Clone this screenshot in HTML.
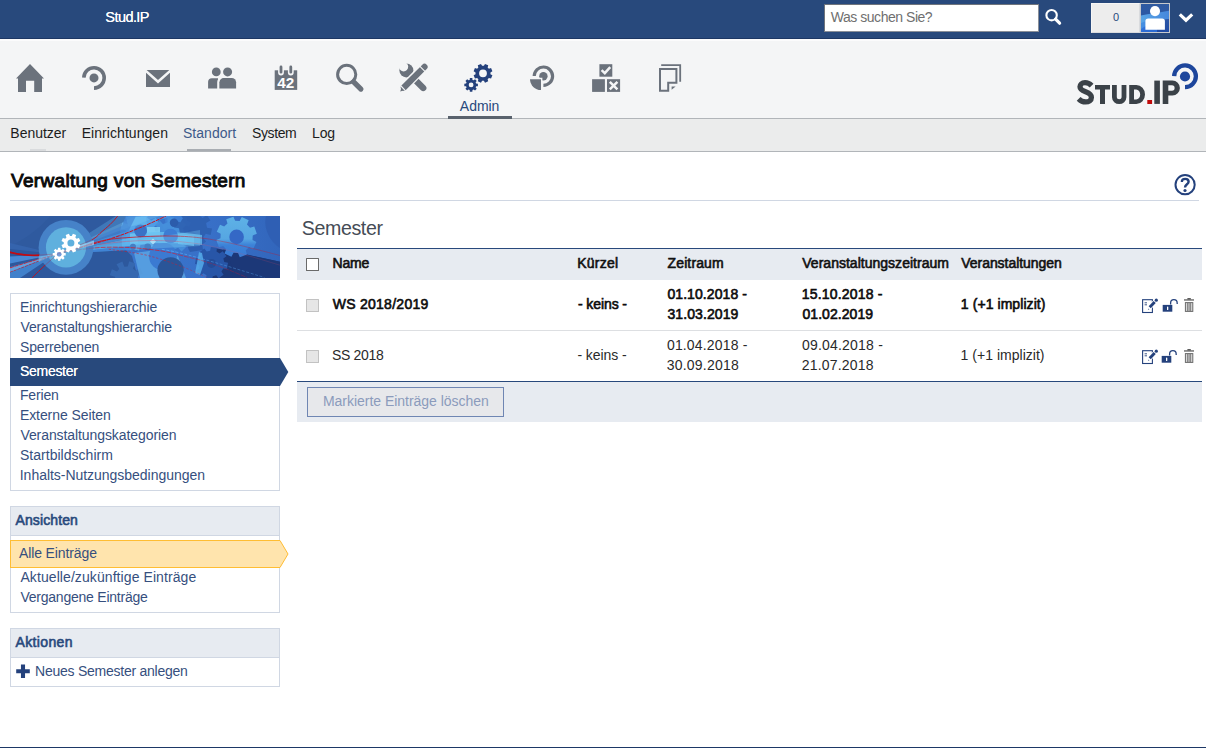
<!DOCTYPE html>
<html lang="de"><head><meta charset="utf-8"><title>Verwaltung von Semestern - Stud.IP</title>
<style>
html,body{margin:0;padding:0;}
body{width:1206px;height:748px;overflow:hidden;background:#fff;font-family:"Liberation Sans",sans-serif;font-size:14px;position:relative;}
.a{position:absolute;}
.t{position:absolute;white-space:pre;line-height:20px;height:20px;}
svg{position:absolute;overflow:visible;}
</style></head>
<body>
<div class="a" style="left:0;top:0;width:1206px;height:38px;background:#28497c;"></div>
<div class="a" style="left:0;top:38px;width:1206px;height:1px;background:#1d3764;"></div>
<div class="a" style="left:0;top:39px;width:1206px;height:2px;background:#fbfbfc;"></div>
<div class="a" style="left:0;top:41px;width:1206px;height:77px;background:#f4f5f6;"></div>
<div class="a" style="left:0;top:118px;width:1206px;height:1px;background:#b1b5b9;"></div>
<div class="a" style="left:0;top:119px;width:1206px;height:32px;background:#ebecec;"></div>
<div class="a" style="left:0;top:151px;width:1206px;height:1px;background:#b1b5b9;"></div>
<div class="t" style="left:105.37px;top:7.18px;font-size:14.5px;font-weight:400;letter-spacing:-0.578px;color:#fff;text-shadow:0 0 0.4px #fff;">Stud.IP</div>
<div class="a" style="left:824px;top:4px;width:215px;height:28px;box-sizing:border-box;background:#fff;border:1px solid #8a8f98;border-top-color:#6f747c;border-left-color:#6f747c;"></div>
<div class="t" style="left:830.76px;top:6.75px;font-size:14px;font-weight:400;letter-spacing:-0.466px;color:#6f6f6f;">Was suchen Sie?</div>
<svg style="left:1040px;top:4px" width="26" height="26" viewBox="1040 4 26 26"><circle cx="1051.6" cy="15.2" r="5.2" fill="none" stroke="#fff" stroke-width="2.1"/><path d="M1055.6,19.2 L1059.6,23.2" stroke="#fff" stroke-width="3.2" stroke-linecap="round"/></svg>
<div class="a" style="left:1091px;top:3px;width:49px;height:30px;box-sizing:border-box;background:#ededed;border:1px solid #d9dbde;border-top-color:#f6f6f6;border-left-color:#f6f6f6;"></div>
<div class="t" style="left:1096px;width:40px;text-align:center;top:7.4px;font-size:11px;color:#28497c;">0</div>
<svg style="left:1140px;top:3px" width="30" height="30" viewBox="-1 0 30 30">
<defs><linearGradient id="av" x1="0" y1="0" x2="0" y2="1"><stop offset="0" stop-color="#2f5aa0"/><stop offset="0.5" stop-color="#2c58a6"/><stop offset="1" stop-color="#1f4aa4"/></linearGradient>
<linearGradient id="av2" x1="0" y1="0" x2="1" y2="0"><stop offset="0" stop-color="#5aa6e6"/><stop offset="1" stop-color="#4586dc"/></linearGradient>
<clipPath id="avc"><rect x="-1" y="0" width="30" height="30"/></clipPath></defs>
<rect x="-1" y="0" width="30" height="30" fill="url(#av)"/>
<g clip-path="url(#avc)">
<path d="M-1,12.6 L0,12.5 C8,10.5 18,10 29,7.5 L29,16 C22,15.5 14,18 0,27 Z" fill="url(#av2)"/>
<path d="M0,20 C8,16 18,15 24,16 C16,20 8,24 0,29 Z" fill="#3f86e0" opacity="0.7"/>
<path d="M0,26 C6,22 12,20 16,19.5 L16,30 L0,30 Z" fill="#2f70d8" opacity="0.9"/>
</g>
<circle cx="14" cy="8.1" r="5.05" fill="#fff"/>
<path d="M4.4,26.8 V18.3 a2.8,2.8 0 0 1 2.8,-2.8 h13.9 a2.8,2.8 0 0 1 2.8,2.8 V26.8 Z" fill="#fff"/>
<rect x="-0.5" y="0.5" width="29" height="29" fill="none" stroke="#c6c8cc" stroke-width="1"/>
</svg>
<svg style="left:1176px;top:10px" width="20" height="14" viewBox="1176 10 20 14"><path d="M1179.8,14.4 L1186,20.2 L1192.2,14.4" fill="none" stroke="#fff" stroke-width="3.2" stroke-linejoin="miter"/></svg>
<svg style="left:0;top:58px" width="1206" height="40" viewBox="0 58 1206 40"><path d="M30,64.1 L44,78.4 L42,78.4 L42,92 L34.2,92 L34.2,80.8 L26,80.8 L26,92 L18,92 L18,78.4 L16,78.4 Z" fill="#6b727c"/><path d="M83.8,77.6 A10.2,10.2 0 1 1 94,88.1" fill="none" stroke="#6b727c" stroke-width="3.6"/><circle cx="94" cy="77.9" r="4.5" fill="#6b727c"/><rect x="146" y="70" width="24" height="17" fill="#6b727c"/><path d="M145.5,70.6 L158,81.7 L170.5,70.6" fill="none" stroke="#f4f5f6" stroke-width="2.6"/><circle cx="216.3" cy="71.9" r="4.4" fill="#6b727c"/><circle cx="227.6" cy="71.9" r="4.5" fill="#6b727c"/><path d="M208.1,88.6 V82 a3.8,3.8 0 0 1 3.8,-3.8 H218 V88.6 Z" fill="#6b727c"/><path d="M219.2,88.6 V82.2 a4.3,4.3 0 0 1 4.3,-4.3 h8.3 a4.3,4.3 0 0 1 4.3,4.3 V88.6 Z" fill="#6b727c" stroke="#f4f5f6" stroke-width="0" /><path d="M218.2,89 V82.2 a5.3,5.3 0 0 1 3,-4.6" fill="none" stroke="#f4f5f6" stroke-width="2"/><rect x="274.7" y="70.3" width="22.5" height="19.6" fill="#6b727c"/><path d="M281,66.5 V72.5 M290.8,66.5 V72.5" stroke="#f4f5f6" stroke-width="5.8" stroke-linecap="round"/><path d="M281,67 V72.2 M290.8,67 V72.2" stroke="#6b727c" stroke-width="2.8" stroke-linecap="round"/><text x="285.8" y="87.6" font-family="Liberation Sans, sans-serif" font-weight="700" font-size="14" fill="#fff" text-anchor="middle" textLength="17" lengthAdjust="spacingAndGlyphs">42</text><circle cx="346.7" cy="74.4" r="9.1" fill="none" stroke="#6b727c" stroke-width="3"/><path d="M353.6,81.8 L360.9,89.1" stroke="#6b727c" stroke-width="5.2" stroke-linecap="round"/><path d="M410.5,75.3 L423.2,87.9" stroke="#6b727c" stroke-width="6.4" stroke-linecap="round"/><circle cx="406.4" cy="70.4" r="7" fill="#6b727c"/><circle cx="403.6" cy="66.8" r="4.6" fill="#f4f5f6"/><path d="M400.5,90.8 L424.6,66.4" stroke="#f4f5f6" stroke-width="9" stroke-linecap="butt"/><path d="M403.9,87.5 L424.5,66.9" stroke="#6b727c" stroke-width="6.2" stroke-linecap="round"/><path d="M419.2,65.6 L425.4,71.8" stroke="#f4f5f6" stroke-width="1.1"/><path d="M400.2,91.6 L401.6,87.2 L404.6,90.2 Z" fill="#6b727c"/><path d="M401.0,86.0 L405.6,90.8" stroke="#f4f5f6" stroke-width="1.1"/><path d="M490.45,74.19L492.39,75.31L491.06,78.52L488.90,77.93L487.63,79.20L488.22,81.36L485.01,82.69L483.89,80.75L482.11,80.75L480.99,82.69L477.78,81.36L478.37,79.20L477.10,77.93L474.94,78.52L473.61,75.31L475.55,74.19L475.55,72.41L473.61,71.29L474.94,68.08L477.10,68.67L478.37,67.40L477.78,65.24L480.99,63.91L482.11,65.85L483.89,65.85L485.01,63.91L488.22,65.24L487.63,67.40L488.90,68.67L491.06,68.08L492.39,71.29L490.45,72.41ZM486.90,73.30A3.9,3.9 0 1 0 479.10,73.30A3.9,3.9 0 1 0 486.90,73.30Z" fill="#24417c" fill-rule="evenodd"/><path d="M476.11,83.50L477.89,83.65L477.89,86.15L476.11,86.30L475.63,87.45L476.78,88.81L475.01,90.58L473.65,89.43L472.50,89.91L472.35,91.69L469.85,91.69L469.70,89.91L468.55,89.43L467.19,90.58L465.42,88.81L466.57,87.45L466.09,86.30L464.31,86.15L464.31,83.65L466.09,83.50L466.57,82.35L465.42,80.99L467.19,79.22L468.55,80.37L469.70,79.89L469.85,78.11L472.35,78.11L472.50,79.89L473.65,80.37L475.01,79.22L476.78,80.99L475.63,82.35ZM473.50,84.90A2.4,2.4 0 1 0 468.70,84.90A2.4,2.4 0 1 0 473.50,84.90Z" fill="#24417c" fill-rule="evenodd"/><path d="M534.2,76 A9.2,9.2 0 1 1 543.4,85.4" fill="none" stroke="#6b727c" stroke-width="3.2"/><circle cx="543.4" cy="76.2" r="4.2" fill="#6b727c"/><path d="M542.4,77.8 V91.4 A12.6,12.6 0 0 1 528.6,77.8 Z" fill="#f4f5f6"/><path d="M541,79.2 V90 A10.9,10.9 0 0 1 530,79.2 Z" fill="#6b727c"/><rect x="599.4" y="64.2" width="12.9" height="12.5" fill="#6b727c"/><path d="M601.6,70.2 L604.8,73.2 L610.2,67.2" fill="none" stroke="#f4f5f6" stroke-width="2.5"/><rect x="592.1" y="79.2" width="12.8" height="12.7" fill="#6b727c"/><rect x="607" y="79.2" width="13.1" height="12.7" fill="#6b727c"/><path d="M609.8,81.8 L617.4,89.4 M617.4,81.8 L609.8,89.4" stroke="#f4f5f6" stroke-width="2.5"/><path d="M660,69 H676.4 V82.8 H668.2 V90.8 H660 Z" fill="none" stroke="#6b727c" stroke-width="2"/><path d="M661.2,65.2 H680.2 V81.7" fill="none" stroke="#6b727c" stroke-width="1.8"/><path d="M671.6,89.8 V86.6 H675.6 Z" fill="#6b727c"/></svg>
<div class="t" style="left:459.83px;top:96.15px;font-size:14px;font-weight:400;letter-spacing:-0.03px;color:#28497c;">Admin</div>
<div class="a" style="left:448px;top:116px;width:64px;height:3px;background:#59626d;"></div>
<svg style="left:1070px;top:58px" width="136" height="52" viewBox="1070 58 136 52">
<path d="M1091.6,85.6 C1089.6,83.6 1087.3,82.7 1085,82.7 C1081.8,82.7 1080,84.6 1080,86.8 C1080,89.6 1082.6,90.7 1085.6,91.8 C1088.8,93 1091.4,94.3 1091.4,97.4 C1091.4,100.4 1088.8,101.9 1085.6,101.9 C1082.8,101.9 1080.6,100.8 1078.6,98.8" fill="none" stroke="#3b4248" stroke-width="5.3"/>
<path d="M1095,85.1 H1110 V89.6 H1105 V103.9 H1100 V89.6 H1095 Z" fill="#3b4248"/>
<path d="M1114.4,85.1 V97.3 a4.8,4.4 0 0 0 9.6,0 V85.1" fill="none" stroke="#3b4248" stroke-width="4.8"/>
<path d="M1129.2,85.1 H1136.4 a8.6,9.4 0 0 1 0,18.8 H1129.2 Z M1134,89.4 V99.6 H1136.2 a4,5.1 0 0 0 0,-10.2 Z" fill="#3b4248" fill-rule="evenodd"/>
<rect x="1147.3" y="100" width="4.8" height="4" fill="#c00a0a"/>
<rect x="1154.3" y="80.6" width="5.6" height="23.3" fill="#3b4248"/>
<path d="M1162.7,80.6 H1172.4 a7.5,7.4 0 0 1 0,14.8 H1168.3 V103.9 H1162.7 Z M1168.3,85.3 V90.7 H1172 a2.6,2.7 0 0 0 0,-5.4 Z" fill="#3b4248" fill-rule="evenodd"/>
<path d="M1174.2,76.1 A10.85,10.85 0 1 1 1185,87.1" fill="none" stroke="#1d469c" stroke-width="4.3"/>
<circle cx="1185" cy="76.5" r="5.1" fill="#1d469c"/>
</svg>
<div class="t" style="left:10.32px;top:122.85px;font-size:14px;font-weight:400;letter-spacing:-0.011px;color:#1c1c1c;">Benutzer</div>
<div class="t" style="left:81.72px;top:122.85px;font-size:14px;font-weight:400;letter-spacing:0.054px;color:#1c1c1c;">Einrichtungen</div>
<div class="t" style="left:182.97px;top:122.85px;font-size:14px;font-weight:400;letter-spacing:0.031px;color:#3d5a8a;">Standort</div>
<div class="t" style="left:251.97px;top:122.85px;font-size:14px;font-weight:400;letter-spacing:-0.379px;color:#1c1c1c;">System</div>
<div class="t" style="left:312.12px;top:122.85px;font-size:14px;font-weight:400;letter-spacing:-0.178px;color:#1c1c1c;">Log</div>
<div class="a" style="left:30px;top:149px;width:16px;height:2px;background:#d9dbdd;"></div>
<div class="a" style="left:187px;top:149px;width:44px;height:2px;background:#a9adb2;"></div>
<div class="t" style="left:11.00px;top:171.02px;font-size:19px;font-weight:400;-webkit-text-stroke:0.95px #0a0a0a;letter-spacing:0.32px;color:#0a0a0a;">Verwaltung von Semestern</div>
<div class="a" style="left:10px;top:200px;width:1189px;height:1px;background:#d0d7e3;"></div>
<svg style="left:1173px;top:173px" width="24" height="24" viewBox="1173 173 24 24"><circle cx="1185.1" cy="184.7" r="9.6" fill="none" stroke="#24417c" stroke-width="2"/>
<path d="M1181.9,182 C1181.7,179.6 1183.3,178.9 1185.2,178.9 C1187.3,178.9 1188.6,180 1188.6,181.8 C1188.6,184.2 1185,184.3 1185,187.4" fill="none" stroke="#24417c" stroke-width="2.4"/><circle cx="1185" cy="190.5" r="1.6" fill="#24417c"/></svg>
<svg style="left:10px;top:216px" width="270" height="62" viewBox="0 0 270 62">
<defs>
<clipPath id="bc"><rect x="0" y="0" width="270" height="62"/></clipPath>
<linearGradient id="lgA" x1="0" y1="0" x2="0" y2="1"><stop offset="0" stop-color="#5eb2e6"/><stop offset="0.55" stop-color="#56a6e2"/><stop offset="0.7" stop-color="#3c82d8"/><stop offset="1" stop-color="#3a7cd4"/></linearGradient>
<linearGradient id="lgR" x1="0" y1="0" x2="1" y2="0"><stop offset="0" stop-color="#3a76cc"/><stop offset="0.55" stop-color="#3870c8"/><stop offset="1" stop-color="#3266bc"/></linearGradient>
<clipPath id="cc"><circle cx="56" cy="31.4" r="27.4"/></clipPath>
<linearGradient id="mg" x1="0" y1="0" x2="1" y2="0"><stop offset="0" stop-color="#fff"/><stop offset="0.55" stop-color="#fff"/><stop offset="0.75" stop-color="#777"/><stop offset="1" stop-color="#666"/></linearGradient>
<mask id="lm" maskUnits="userSpaceOnUse" x="0" y="0" width="270" height="62"><rect x="0" y="0" width="270" height="62" fill="url(#mg)"/></mask>
</defs>
<g clip-path="url(#bc)">
<rect x="0" y="0" width="270" height="62" fill="#2f5a9f"/>
<path d="M0,0 H40 C30,12 14,24 0,30 Z" fill="#3561a6" opacity="0.55"/>
<path d="M0,30 C14,24 30,12 40,0 H0 Z" fill="none"/>
<rect x="0" y="33" width="120" height="29" fill="#2c559b" opacity="0.5"/>
<!-- right lighter region -->
<path d="M116,0 H270 V62 H128 L122,40 L112,30 L110,14 Z" fill="url(#lgR)"/>
<path d="M127.93,63.24L133.28,64.71L131.08,70.74L126.04,68.42L123.71,70.96L126.45,75.78L120.63,78.49L118.71,73.29L115.26,73.43L113.79,78.78L107.76,76.58L110.08,71.54L107.54,69.21L102.72,71.95L100.01,66.13L105.21,64.21L105.07,60.76L99.72,59.29L101.92,53.26L106.96,55.58L109.29,53.04L106.55,48.22L112.37,45.51L114.29,50.71L117.74,50.57L119.21,45.22L125.24,47.42L122.92,52.46L125.46,54.79L130.28,52.05L132.99,57.87L127.79,59.79Z" fill="#3668b0"/>
<path d="M145.09,15.24L150.54,16.34L148.84,23.01L143.53,21.37L140.54,25.36L143.61,29.99L137.69,33.50L135.10,28.58L130.16,29.29L129.06,34.74L122.39,33.04L124.03,27.73L120.04,24.74L115.41,27.81L111.90,21.89L116.82,19.30L116.11,14.36L110.66,13.26L112.36,6.59L117.67,8.23L120.66,4.24L117.59,-0.39L123.51,-3.90L126.10,1.02L131.04,0.31L132.14,-5.14L138.81,-3.44L137.17,1.87L141.16,4.86L145.79,1.79L149.30,7.71L144.38,10.30Z" fill="#4f9de4"/>
<path d="M176.96,4.88L180.88,5.90L179.35,10.83L175.55,9.46L173.13,12.38L175.18,15.87L170.61,18.27L168.89,14.61L165.12,14.96L164.10,18.88L159.17,17.35L160.54,13.55L157.62,11.13L154.13,13.18L151.73,8.61L155.39,6.89L155.04,3.12L151.12,2.10L152.65,-2.83L156.45,-1.46L158.87,-4.38L156.82,-7.87L161.39,-10.27L163.11,-6.61L166.88,-6.96L167.90,-10.88L172.83,-9.35L171.46,-5.55L174.38,-3.13L177.87,-5.18L180.27,-0.61L176.61,1.11Z" fill="#3f80d4"/>
<path d="M174.26,16.95L179.32,16.73L179.32,23.27L174.26,23.05L172.42,27.50L176.14,30.93L171.53,35.54L168.10,31.82L163.65,33.66L163.87,38.72L157.33,38.72L157.55,33.66L153.10,31.82L149.67,35.54L145.06,30.93L148.78,27.50L146.94,23.05L141.88,23.27L141.88,16.73L146.94,16.95L148.78,12.50L145.06,9.07L149.67,4.46L153.10,8.18L157.55,6.34L157.33,1.28L163.87,1.28L163.65,6.34L168.10,8.18L171.53,4.46L176.14,9.07L172.42,12.50Z" fill="#4690dc" opacity="0.9"/>
<path d="M197.00,11.72L201.99,12.52L200.69,18.92L195.78,17.71L193.09,21.70L196.06,25.80L190.62,29.41L188.00,25.08L183.28,26.00L182.48,30.99L176.08,29.69L177.29,24.78L173.30,22.09L169.20,25.06L165.59,19.62L169.92,17.00L169.00,12.28L164.01,11.48L165.31,5.08L170.22,6.29L172.91,2.30L169.94,-1.80L175.38,-5.41L178.00,-1.08L182.72,-2.00L183.52,-6.99L189.92,-5.69L188.71,-0.78L192.70,1.91L196.80,-1.06L200.41,4.38L196.08,7.00Z" fill="#2d5eae" opacity="0.85"/>
<path d="M179,14 C186,16 192,22 193,34 L180,36 C176,30 176,20 179,14 Z" fill="#2b5aac" opacity="0.85"/>
<!-- lower light area -->
<path d="M124,37 L147,34 L168,40 L176,62 L130,62 Z" fill="#5aa4e4" opacity="0.85"/>
<circle cx="153" cy="40.4" r="13.9" fill="#3b7ad2"/>
<circle cx="160.6" cy="54.5" r="13.2" fill="#2a5598"/>
<path d="M116,1 L136,1 L137,9 L118,10 Z" fill="#5fb4ec" opacity="0.85"/>
<path d="M137,11 L150,11 L150,20 L137,20 Z" fill="#80d2f6" opacity="0.85"/>
<path d="M116,18 L127,17 L128,27 L116,28 Z" fill="#74c8f4" opacity="0.8"/>
<path d="M168,18 L184,20 L184,30 L168,28 Z" fill="#6cc4f2" opacity="0.7"/>
<!-- cyan band -->
<path d="M112,20 C135,15 165,15 192,19 L192,29 C165,26 135,26 112,31 Z" fill="#68c2f2" opacity="0.75"/>
<circle cx="130.6" cy="14.8" r="6.4" fill="#3a72c6"/>
<circle cx="160.6" cy="20" r="7.3" fill="#3c7cd4"/>
<circle cx="164" cy="6.8" r="4.2" fill="#2c5cab"/>
<circle cx="123" cy="30.7" r="3" fill="#2c5cb0"/>
<circle cx="137.7" cy="30.7" r="3.3" fill="#2c5cb0"/>
<path d="M140,25.5 l3,-3 l3,3 l-3,3 z" fill="#bfe4f8"/>
<!-- navy wedge -->
<path d="M205,32 L270,45.7 V62 H200 Z" fill="#1c3878"/>
<path d="M214.23,46.09L217.99,46.79L217.07,52.85L213.28,52.42L211.43,55.47L213.59,58.63L208.65,62.27L206.28,59.28L202.81,60.13L202.11,63.89L196.05,62.97L196.48,59.18L193.43,57.33L190.27,59.49L186.63,54.55L189.62,52.18L188.77,48.71L185.01,48.01L185.93,41.95L189.72,42.38L191.57,39.33L189.41,36.17L194.35,32.53L196.72,35.52L200.19,34.67L200.89,30.91L206.95,31.83L206.52,35.62L209.57,37.47L212.73,35.31L216.37,40.25L213.38,42.62Z" fill="#2856a8"/>
<circle cx="201.5" cy="47.4" r="4.5" fill="#244c98"/>
<path d="M213,33.3 L270,45.7 V62 H222 C224,52 220,42 213,33.3 Z" fill="#1c3878"/>
<path d="M242.51,23.96L246.43,26.09L243.17,32.97L239.04,31.28L235.69,34.31L236.96,38.59L229.78,41.15L228.05,37.03L223.54,36.81L221.41,40.73L214.53,37.47L216.22,33.34L213.19,29.99L208.91,31.26L206.35,24.08L210.47,22.35L210.69,17.84L206.77,15.71L210.03,8.83L214.16,10.52L217.51,7.49L216.24,3.21L223.42,0.65L225.15,4.77L229.66,4.99L231.79,1.07L238.67,4.33L236.98,8.46L240.01,11.81L244.29,10.54L246.85,17.72L242.73,19.45Z" fill="url(#lgA)"/>
<circle cx="226.6" cy="20.9" r="7.3" fill="#3468c6"/>
<path d="M256,0 H270 V32 C260,26 253,12 256,0 Z" fill="#2f5eb2" opacity="0.9"/>
<path d="M189,36 l3,1 l2,10 l-4,12 l-5,-2 l2,-10 z" fill="#58b0ee" opacity="0.8"/>
<!-- beams right of circle -->
<path d="M46,38 L106,0 L162,0 Z" fill="#62b2ee" opacity="0.33"/>
<path d="M46,38 L126,0 L150,0 Z" fill="#7cc8f4" opacity="0.3"/>
<path d="M46,38 L190,14 L190,30 Z" fill="#7fd0f6" opacity="0.3"/>
<path d="M46,38 L112,10 L116,0 L126,0 L118,16 Z" fill="#3f7fd0" opacity="0.6"/>
<path d="M46,38 L120,14 L120,22 Z" fill="#4b95de" opacity="0.8"/>
<path d="M46,38 L120,22 L120,30 Z" fill="#5ab0ec" opacity="0.8"/>
<path d="M46,38 L120,30 L120,34 Z" fill="#3f86dc" opacity="0.8"/>
<!-- beams left -->
<path d="M46,38 L0,40.4 L0,47.4 Z" fill="#4a8edc" opacity="0.9"/>
<path d="M46,38 L0,51 L0,62 L10,62 Z" fill="#4588d4" opacity="0.85"/>
<path d="M46,38 L0,27 L0,33 Z" fill="#3868b4" opacity="0.7"/>
<g id="rl" mask="url(#lm)">
<path d="M0,36 C10,38.5 20,39.6 29,39 C38,38.6 44,38.4 50,37 C62,34 74,30 83,27 C95,23.4 108,22 121,21.4 C135,20.4 148,20 156,20 C170,20 180,20.6 190,21.8 C204,23.6 212,25.4 220,27 C240,31.6 255,35.6 270,39.5" fill="none" stroke="#d1101c" stroke-width="0.9" opacity="0.85"/>
<path d="M0,36.4 C10,38.9 20,40 29,39.4" fill="none" stroke="#c00c14" stroke-width="1.6"/>
<path d="M22,62 C26,57.6 30.6,53.4 35,49.3 C40,44.8 44.6,40.6 49.4,36.8 C58,33 72,28.6 83,23.2 C86,21.4 88,19.6 90,17.4 C94,13.6 97,11.4 100,8.6 C103,5.6 105.6,3 107.7,0" fill="none" stroke="#c4101c" stroke-width="0.9"/>
<path d="M0,52 C14,47.6 28,43.4 42,39.5 C58,35 74,30.6 90,26 C112,19.6 134,10.6 156,0" fill="none" stroke="#d1101c" stroke-width="1" stroke-dasharray="4 0.8"/>
<path d="M49,37 C62,34.6 76,32.6 90,31.5 C100,31 110,31.1 119,31.5 C130,32 142,33.6 152,35 C160,36.4 168,38.4 175,40.4 C180,41.6 185,42.8 190,44 C206,48.6 222,55 237,61.5" fill="none" stroke="#d81828" stroke-width="0.9" stroke-dasharray="5 1" opacity="0.8"/>
<path d="M90,28.4 C99,27 108,26 116.5,25.4 C125,24.8 134,24.4 143,24.5 C158,24.6 168,25.4 175,26.2 C185,27.4 188,27.6 190,28 C220,33.6 246,42 270,49.2" fill="none" stroke="#e24a66" stroke-width="0.6" opacity="0.7"/>
<path d="M98.8,33.3 C110,34.6 122,36.4 134,38.6 C150,42.4 164,47.6 175,51.8 C183,55 190,58.2 197,61.5" fill="none" stroke="#d81828" stroke-width="0.7" stroke-dasharray="2.4 1.6" opacity="0.75"/>
<path d="M151.8,33.3 C160,34.6 168,36.4 175,38.2 C200,44.6 230,54 254.4,61.5" fill="none" stroke="#58a8f4" stroke-width="0.9" stroke-dasharray="3 1.6"/>
<path d="M0,56 C14,51 28,45 42,40" fill="none" stroke="#c4101c" stroke-width="0.8" stroke-dasharray="3 1"/>
</g>
<circle cx="56" cy="31.4" r="27.4" fill="#4682c8"/>
<circle cx="56" cy="31.4" r="20.1" fill="#5fb0de"/>
<path d="M42,38.5 L84,24.5 L84,29 Z" fill="#9fd2f2" opacity="0.75"/>
<path d="M46,38 L28.6,40.6 L28.6,46 Z" fill="#7cc0ee" opacity="0.7"/>
<path d="M46,38 L0,52 L0,56 Z" fill="#7cbcf0" opacity="0.55"/>
<use href="#rl" opacity="0.32" clip-path="url(#cc)"/>
<path d="M68.05,27.96L70.29,29.11L68.96,32.32L66.56,31.55L65.35,32.76L66.12,35.16L62.91,36.49L61.76,34.25L60.04,34.25L58.89,36.49L55.68,35.16L56.45,32.76L55.24,31.55L52.84,32.32L51.51,29.11L53.75,27.96L53.75,26.24L51.51,25.09L52.84,21.88L55.24,22.65L56.45,21.44L55.68,19.04L58.89,17.71L60.04,19.95L61.76,19.95L62.91,17.71L66.12,19.04L65.35,21.44L66.56,22.65L68.96,21.88L70.29,25.09L68.05,26.24ZM64.40,27.10A3.5,3.5 0 1 0 57.40,27.10A3.5,3.5 0 1 0 64.40,27.10Z" fill="#fff" fill-rule="evenodd"/>
<path d="M53.92,36.88L55.69,37.00L55.69,39.40L53.92,39.52L53.47,40.60L54.64,41.94L52.94,43.64L51.60,42.47L50.52,42.92L50.40,44.69L48.00,44.69L47.88,42.92L46.80,42.47L45.46,43.64L43.76,41.94L44.93,40.60L44.48,39.52L42.71,39.40L42.71,37.00L44.48,36.88L44.93,35.80L43.76,34.46L45.46,32.76L46.80,33.93L47.88,33.48L48.00,31.71L50.40,31.71L50.52,33.48L51.60,33.93L52.94,32.76L54.64,34.46L53.47,35.80ZM51.50,38.20A2.3,2.3 0 1 0 46.90,38.20A2.3,2.3 0 1 0 51.50,38.20Z" fill="#fff" fill-rule="evenodd"/>
<circle cx="49.2" cy="38.2" r="2.3" fill="#7a8fd6" opacity="0.6"/>
</g>
</svg>
<div class="a" style="left:10px;top:293px;width:270px;height:198px;box-sizing:border-box;border:1px solid #d0d7e3;background:#fff;"></div>
<div class="t" style="left:19.92px;top:296.75px;font-size:14px;font-weight:400;letter-spacing:-0.05px;color:#364f7e;">Einrichtungshierarchie</div>
<div class="t" style="left:20.43px;top:316.75px;font-size:14px;font-weight:400;letter-spacing:-0.11px;color:#364f7e;">Veranstaltungshierarchie</div>
<div class="t" style="left:19.97px;top:336.75px;font-size:14px;font-weight:400;letter-spacing:-0.16px;color:#364f7e;">Sperrebenen</div>
<div class="a" style="left:10px;top:358px;width:270px;height:28px;background:#28497c;"></div>
<svg style="left:280px;top:358px" width="9" height="28" viewBox="0 0 9 28"><path d="M0,0 L8.3,14 L0,28 Z" fill="#28497c"/></svg>
<div class="t" style="left:19.97px;top:361.35px;font-size:14px;font-weight:400;letter-spacing:-0.29px;color:#fff;text-shadow:0 0 0.5px #fff;">Semester</div>
<div class="t" style="left:19.92px;top:384.75px;font-size:14px;font-weight:400;letter-spacing:-0.141px;color:#364f7e;">Ferien</div>
<div class="t" style="left:19.92px;top:404.75px;font-size:14px;font-weight:400;letter-spacing:-0.077px;color:#364f7e;">Externe Seiten</div>
<div class="t" style="left:20.43px;top:424.75px;font-size:14px;font-weight:400;letter-spacing:-0.085px;color:#364f7e;">Veranstaltungskategorien</div>
<div class="t" style="left:19.97px;top:444.75px;font-size:14px;font-weight:400;letter-spacing:0.022px;color:#364f7e;">Startbildschirm</div>
<div class="t" style="left:19.78px;top:464.75px;font-size:14px;font-weight:400;letter-spacing:-0.031px;color:#364f7e;">Inhalts-Nutzungsbedingungen</div>
<div class="a" style="left:10px;top:506px;width:270px;height:107px;box-sizing:border-box;border:1px solid #d0d7e3;background:#fff;"></div>
<div class="a" style="left:11px;top:507px;width:268px;height:28px;background:#e7ebf1;border-bottom:1px solid #d0d7e3;"></div>
<div class="t" style="left:15.51px;top:509.95px;font-size:14px;font-weight:400;-webkit-text-stroke:0.6px #28497c;letter-spacing:0.115px;color:#28497c;">Ansichten</div>
<div class="a" style="left:10px;top:540px;width:270px;height:28px;box-sizing:border-box;background:#ffe4ad;border-top:1px solid #ffbd33;border-bottom:1px solid #ffbd33;border-left:1px solid #ffbd33;"></div>
<svg style="left:280px;top:540px" width="9" height="28" viewBox="0 0 9 28"><path d="M0,0.5 L8,14 L0,27.5" fill="#ffe4ad" stroke="#ffbd33" stroke-width="1"/></svg>
<div class="t" style="left:18.93px;top:542.75px;font-size:14px;font-weight:400;letter-spacing:-0.114px;color:#364f7e;">Alle Einträge</div>
<div class="t" style="left:20.43px;top:566.55px;font-size:14px;font-weight:400;letter-spacing:0.083px;color:#364f7e;">Aktuelle/zukünftige Einträge</div>
<div class="t" style="left:20.43px;top:586.55px;font-size:14px;font-weight:400;letter-spacing:-0.231px;color:#364f7e;">Vergangene Einträge</div>
<div class="a" style="left:10px;top:628px;width:270px;height:59px;box-sizing:border-box;border:1px solid #d0d7e3;background:#fff;"></div>
<div class="a" style="left:11px;top:629px;width:268px;height:28px;background:#e7ebf1;border-bottom:1px solid #d0d7e3;"></div>
<div class="t" style="left:15.51px;top:631.75px;font-size:14px;font-weight:400;-webkit-text-stroke:0.6px #28497c;letter-spacing:0.36px;color:#28497c;">Aktionen</div>
<svg style="left:15px;top:663px" width="16" height="16" viewBox="15 663 16 16"><path d="M23,664.6 V678 M16.2,671.3 H29.8" stroke="#24417c" stroke-width="4.1"/></svg>
<div class="t" style="left:35.12px;top:660.95px;font-size:14px;font-weight:400;letter-spacing:-0.25px;color:#364f7e;">Neues Semester anlegen</div>
<div class="t" style="left:301.80px;top:218.11px;font-size:19.6px;font-weight:400;letter-spacing:-0.388px;color:#454c56;">Semester</div>
<div class="a" style="left:297px;top:248px;width:905px;height:1px;background:#28497c;"></div>
<div class="a" style="left:297px;top:249px;width:905px;height:31px;background:#e7ebf1;"></div>
<div class="a" style="left:297px;top:330px;width:905px;height:1px;background:#dddfe2;"></div>
<div class="a" style="left:297px;top:381px;width:905px;height:1px;background:#28497c;"></div>
<div class="a" style="left:297px;top:382px;width:905px;height:40px;background:#e7ebf1;"></div>
<div class="a" style="left:306px;top:258px;width:13px;height:13px;box-sizing:border-box;background:#fff;border:1px solid #6a6a6a;border-radius:0.5px;"></div>
<div class="a" style="left:306px;top:299px;width:13px;height:13px;box-sizing:border-box;background:#e6e6e6;border:1px solid #c2c2c2;border-radius:0.5px;"></div>
<div class="a" style="left:306px;top:350px;width:13px;height:13px;box-sizing:border-box;background:#e6e6e6;border:1px solid #c2c2c2;border-radius:0.5px;"></div>
<div class="t" style="left:332.54px;top:252.75px;font-size:14px;font-weight:400;-webkit-text-stroke:0.6px #111;letter-spacing:-0.172px;color:#111;">Name</div>
<div class="t" style="left:577.24px;top:252.75px;font-size:14px;font-weight:400;-webkit-text-stroke:0.6px #111;letter-spacing:0.235px;color:#111;">Kürzel</div>
<div class="t" style="left:667.55px;top:252.75px;font-size:14px;font-weight:400;-webkit-text-stroke:0.6px #111;letter-spacing:0.125px;color:#111;">Zeitraum</div>
<div class="t" style="left:802.29px;top:252.75px;font-size:14px;font-weight:400;-webkit-text-stroke:0.6px #111;letter-spacing:0.015px;color:#111;">Veranstaltungszeitraum</div>
<div class="t" style="left:961.29px;top:252.75px;font-size:14px;font-weight:400;-webkit-text-stroke:0.6px #111;letter-spacing:-0.05px;color:#111;">Veranstaltungen</div>
<div class="t" style="left:332.71px;top:293.55px;font-size:14px;font-weight:400;-webkit-text-stroke:0.6px #0c0c0c;letter-spacing:0.268px;color:#0c0c0c;">WS 2018/2019</div>
<div class="t" style="left:577.93px;top:293.55px;font-size:14px;font-weight:400;-webkit-text-stroke:0.6px #0c0c0c;letter-spacing:-0.084px;color:#0c0c0c;">- keins -</div>
<div class="t" style="left:667.44px;top:284.35px;font-size:14px;font-weight:400;-webkit-text-stroke:0.6px #0c0c0c;letter-spacing:0.074px;color:#0c0c0c;">01.10.2018 -</div>
<div class="t" style="left:667.41px;top:304.35px;font-size:14px;font-weight:400;-webkit-text-stroke:0.6px #0c0c0c;letter-spacing:0.092px;color:#0c0c0c;">31.03.2019</div>
<div class="t" style="left:801.83px;top:284.35px;font-size:14px;font-weight:400;-webkit-text-stroke:0.6px #0c0c0c;letter-spacing:0.175px;color:#0c0c0c;">15.10.2018 -</div>
<div class="t" style="left:802.44px;top:304.35px;font-size:14px;font-weight:400;-webkit-text-stroke:0.6px #0c0c0c;letter-spacing:0.066px;color:#0c0c0c;">01.02.2019</div>
<div class="t" style="left:960.83px;top:293.55px;font-size:14px;font-weight:400;-webkit-text-stroke:0.6px #0c0c0c;letter-spacing:0.073px;color:#0c0c0c;">1 (+1 implizit)</div>
<div class="t" style="left:331.97px;top:344.55px;font-size:14px;font-weight:400;letter-spacing:-0.334px;color:#2a2a2a;">SS 2018</div>
<div class="t" style="left:577.40px;top:344.55px;font-size:14px;font-weight:400;letter-spacing:-0.067px;color:#2a2a2a;">- keins -</div>
<div class="t" style="left:666.94px;top:334.75px;font-size:14px;font-weight:400;letter-spacing:0.158px;color:#2a2a2a;">01.04.2018 -</div>
<div class="t" style="left:666.77px;top:354.75px;font-size:14px;font-weight:400;letter-spacing:0.213px;color:#2a2a2a;">30.09.2018</div>
<div class="t" style="left:801.94px;top:334.75px;font-size:14px;font-weight:400;letter-spacing:0.203px;color:#2a2a2a;">09.04.2018 -</div>
<div class="t" style="left:801.84px;top:354.75px;font-size:14px;font-weight:400;letter-spacing:0.183px;color:#2a2a2a;">21.07.2018</div>
<div class="t" style="left:960.58px;top:344.55px;font-size:14px;font-weight:400;letter-spacing:0.021px;color:#2a2a2a;">1 (+1 implizit)</div>
<svg style="left:1136px;top:294px" width="70" height="24" viewBox="1136 294 70 24">
<rect x="1142.6" y="299.7" width="9.8" height="12.8" fill="#fff" stroke="#24417c" stroke-width="1.1"/>
<path d="M1144.6,302.8 H1147 M1144.6,304.8 H1147" stroke="#3c5688" stroke-width="1"/>
<path d="M1148.6,308.4 L1149.4,309.6 L1148,309.8 Z" fill="#24417c"/>
<path d="M1149.6,307.4 L1156.4,300.4" stroke="#fff" stroke-width="4.4"/>
<path d="M1149.7,307.2 L1154.7,301.9" stroke="#24417c" stroke-width="2.9"/><circle cx="1156.3" cy="300.2" r="1.6" fill="#24417c"/>
<g transform="translate(0,0)">
<rect x="1162.7" y="304.9" width="9.6" height="6.8" fill="#24417c"/>
<rect x="1167" y="306.4" width="1.3" height="3.6" rx="0.6" fill="#fff"/>
<path d="M1170.6,304.6 V303.2 a3.3,3.5 0 0 1 6.6,0 V304" fill="none" stroke="#24417c" stroke-width="1.3"/>
</g>
<rect x="1184" y="299.3" width="10" height="1.3" fill="#5e5e5e"/>
<rect x="1187.4" y="298" width="3.4" height="1.6" fill="#5e5e5e"/>
<rect x="1185.4" y="302.6" width="7.4" height="8.8" fill="#d8d8d8" stroke="#6a6a6a" stroke-width="1"/>
<path d="M1187.6,303 V311 M1189.1,303 V311 M1190.6,303 V311" stroke="#6a6a6a" stroke-width="0.8"/>
</svg>
<svg style="left:1136px;top:345px" width="70" height="24" viewBox="1136 294 70 24">
<rect x="1142.6" y="299.7" width="9.8" height="12.8" fill="#fff" stroke="#24417c" stroke-width="1.1"/>
<path d="M1144.6,302.8 H1147 M1144.6,304.8 H1147" stroke="#3c5688" stroke-width="1"/>
<path d="M1148.6,308.4 L1149.4,309.6 L1148,309.8 Z" fill="#24417c"/>
<path d="M1149.6,307.4 L1156.4,300.4" stroke="#fff" stroke-width="4.4"/>
<path d="M1149.7,307.2 L1154.7,301.9" stroke="#24417c" stroke-width="2.9"/><circle cx="1156.3" cy="300.2" r="1.6" fill="#24417c"/>
<g transform="translate(-1,0)">
<rect x="1162.7" y="304.9" width="9.6" height="6.8" fill="#24417c"/>
<rect x="1167" y="306.4" width="1.3" height="3.6" rx="0.6" fill="#fff"/>
<path d="M1170.6,304.6 V303.2 a3.3,3.5 0 0 1 6.6,0 V304" fill="none" stroke="#24417c" stroke-width="1.3"/>
</g>
<rect x="1184" y="299.3" width="10" height="1.3" fill="#5e5e5e"/>
<rect x="1187.4" y="298" width="3.4" height="1.6" fill="#5e5e5e"/>
<rect x="1185.4" y="302.6" width="7.4" height="8.8" fill="#d8d8d8" stroke="#6a6a6a" stroke-width="1"/>
<path d="M1187.6,303 V311 M1189.1,303 V311 M1190.6,303 V311" stroke="#6a6a6a" stroke-width="0.8"/>
</svg>
<div class="a" style="left:307px;top:387px;width:197px;height:30px;box-sizing:border-box;border:1px solid #6f86b3;background:#e7e8eb;"></div>
<div class="t" style="left:322.92px;top:391.15px;font-size:14px;font-weight:400;letter-spacing:-0.026px;color:#8b9bbc;">Markierte Einträge löschen</div>
<div class="a" style="left:0;top:747px;width:1206px;height:1px;background:#1d3866;"></div>
</body></html>
